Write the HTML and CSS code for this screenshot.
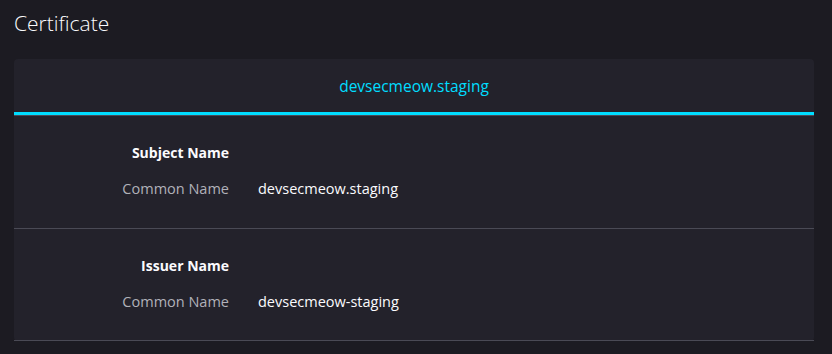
FILE: index.html
```html
<!DOCTYPE html>
<html lang="en">
<head>
    <meta charset="UTF-8">
    <title>Certificate</title>
    <link rel="stylesheet" href="styles.css">
</head>
<body>
    <h1 class="titulo">Certificate</h1>

    <div class="tarjeta">
        <div class="pestanas">
            <div class="pestana activa">devsecmeow.staging</div>
        </div>

        <div class="seccion">
            <div class="encabezado">Subject Name</div>
            <div class="fila">
                <span class="etiqueta">Common Name</span>
                <span class="valor">devsecmeow.staging</span>
            </div>
        </div>

        <div class="seccion">
            <div class="encabezado">Issuer Name</div>
            <div class="fila">
                <span class="etiqueta">Common Name</span>
                <span class="valor">devsecmeow-staging</span>
            </div>
        </div>
    </div>
</body>
</html>
```

FILE: styles.css
```css
body {
    margin: 0;
    padding: 0 18px 0 14px;
    background: #1c1b22;
    color: #fbfbfe;
    font-family: "Open Sans", "Noto Sans", sans-serif;
    height: 354px;
    overflow: hidden;
}

.titulo {
    margin: 0;
    padding-top: 9px;
    height: 59px;
    box-sizing: border-box;
    font-size: 21px;
    font-weight: 300;
    line-height: 28px;
}

.tarjeta {
    background: #23222b;
    border-radius: 4px;
}

.pestanas {
    border-bottom: 1px solid #4a4a55;
}

.pestana {
    height: 53px;
    display: flex;
    align-items: center;
    justify-content: center;
    color: #00ddff;
    font-size: 15.5px;
    border-bottom: 3px solid #00ddff;
}

.seccion {
    display: grid;
    grid-template-columns: 215px 1fr;
    column-gap: 29px;
    row-gap: 16px;
    padding: 27px 0 28.5px;
    border-bottom: 1px solid #4a4a55;
}

.encabezado {
    grid-column: 1;
    text-align: right;
    font-size: 14px;
    font-weight: 700;
    line-height: 20px;
}

.fila {
    display: contents;
}

.etiqueta {
    grid-column: 1;
    text-align: right;
    color: #b1b1b9;
    font-size: 14.5px;
    line-height: 20px;
}

.valor {
    grid-column: 2;
    font-size: 14.5px;
    line-height: 20px;
}
```
